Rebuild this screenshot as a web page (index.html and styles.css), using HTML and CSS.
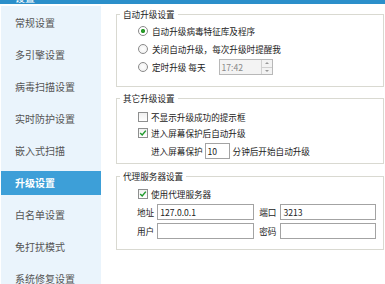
FILE: index.html
```html
<!DOCTYPE html>
<html lang="zh-CN">
<head>
    <meta charset="UTF-8">
    <title>升级设置</title>
    <link rel="stylesheet" href="styles.css">
</head>
<body>
    <div class="titlebar"><span>设置</span></div>
    <div class="main">
        <ul class="nav">
            <li>常规设置</li>
            <li>多引擎设置</li>
            <li>病毒扫描设置</li>
            <li>实时防护设置</li>
            <li>嵌入式扫描</li>
            <li class="active">升级设置</li>
            <li>白名单设置</li>
            <li>免打扰模式</li>
            <li>系统修复设置</li>
        </ul>

        <div class="content">
            <fieldset class="group group-auto">
                <legend>自动升级设置</legend>
                <div class="body">
                    <div class="row"><span class="radio checked"></span>自动升级病毒特征库及程序</div>
                    <div class="row"><span class="radio"></span>关闭自动升级，每次升级时提醒我</div>
                    <div class="row"><span class="radio"></span>定时升级 每天
                        <div class="time">
                            <span class="time-text">17:42</span>
                            <span class="spin"><i class="up"></i><i class="down"></i></span>
                        </div>
                    </div>
                </div>
            </fieldset>

            <fieldset class="group group-other">
                <legend>其它升级设置</legend>
                <div class="body">
                    <div class="row"><span class="check"></span>不显示升级成功的提示框</div>
                    <div class="row"><span class="check"><svg viewBox="0 0 10 10" width="8" height="8"><polyline points="1.5,5 4,7.5 8.5,2" fill="none" stroke="#1f9a2c" stroke-width="1.8"/></svg></span>进入屏幕保护后自动升级</div>
                    <div class="row row-indent">进入屏幕保护<div class="field field-min">10</div>分钟后开始自动升级</div>
                </div>
            </fieldset>

            <fieldset class="group group-proxy">
                <legend>代理服务器设置</legend>
                <div class="body">
                    <div class="row"><span class="check"><svg viewBox="0 0 10 10" width="8" height="8"><polyline points="1.5,5 4,7.5 8.5,2" fill="none" stroke="#1f9a2c" stroke-width="1.8"/></svg></span>使用代理服务器</div>
                    <div class="row row-field">地址<div class="field field-wide">127.0.0.1</div><span class="label-2">端口</span><div class="field field-port">3213</div></div>
                    <div class="row row-field row-second">用户<div class="field field-wide"></div><span class="label-2">密码</span><div class="field field-port"></div></div>
                </div>
            </fieldset>
        </div>
    </div>
</body>
</html>
```

FILE: styles.css
```css
body {
    margin: 0;
    width: 385px;
    height: 284px;
    overflow: hidden;
    background-color: #fff;
    font-family: "Noto Sans CJK SC", "Noto Sans", sans-serif;
    color: #222;
}
.titlebar {
    height: 4px;
    overflow: hidden;
    background-color: #2b8fca;
    padding-left: 15px;
    color: #fff;
    font-size: 10px;
}
.titlebar span {
    display: block;
    line-height: 10px;
    margin-top: -7px;
}
.main {
    display: flex;
    margin-top: 2px;
}
.nav {
    list-style: none;
    margin: 0 0 0 1px;
    padding: 5px 0 0;
    width: 100px;
    height: 278px;
    background-color: #eaf4fc;
    flex-shrink: 0;
}
.nav li {
    height: 24px;
    line-height: 24px;
    margin-bottom: 8px;
    padding-left: 14px;
    font-size: 10px;
    color: #555;
}
.nav li.active {
    background-color: #3d9fd8;
    color: #fff;
    font-weight: bold;
}
.content {
    flex: 1;
    padding: 1px 1px 0 15px;
}
.group {
    margin: 0;
    padding: 0 3px;
    min-width: 0;
    border: 1px solid #d9d9d1;
}
.group legend {
    padding: 0 3px;
    font-size: 8.6px;
    line-height: 14px;
    color: #222;
}
.group-other {
    margin-top: 4px;
}
.group-proxy {
    margin-top: 5px;
}
.body {
    font-size: 8.6px;
    padding-left: 18px;
}
.group-auto .body {
    padding: 1px 0 10px 18px;
}
.group-other .body {
    padding-top: 4px;
    padding-bottom: 4px;
}
.group-proxy .body {
    padding-top: 3px;
    padding-bottom: 10px;
}
.row {
    display: flex;
    align-items: center;
    height: 16px;
}
.group-auto .row {
    height: 18px;
}
.radio {
    width: 10px;
    height: 10px;
    box-sizing: border-box;
    border: 1px solid #8a8a8a;
    border-radius: 50%;
    margin-right: 4px;
    background: radial-gradient(circle, #fff 0, #ececec 100%);
}
.radio.checked {
    background: radial-gradient(circle, #2a9a2a 0, #2a9a2a 1.8px, #fff 2.4px);
}
.check {
    width: 10px;
    height: 10px;
    box-sizing: border-box;
    border: 1px solid #8e8f8f;
    margin-right: 3px;
    background: linear-gradient(#f0f0f0, #fff);
    display: flex;
    align-items: center;
    justify-content: center;
}
.time {
    display: flex;
    width: 54px;
    height: 16px;
    box-sizing: border-box;
    margin-left: 13px;
    border: 1px solid #b8b8b8;
    background-color: #f3f3f3;
}
.time-text {
    flex: 1;
    padding-left: 2px;
    line-height: 14px;
    color: #8a8a8a;
}
.spin {
    width: 10px;
    display: flex;
    flex-direction: column;
    border-left: 1px solid #d0d0d0;
}
.spin i {
    flex: 1;
    display: flex;
    align-items: center;
    justify-content: center;
}
.spin i.up {
    border-bottom: 1px solid #d0d0d0;
}
.spin i::after {
    content: "";
    border-left: 2px solid transparent;
    border-right: 2px solid transparent;
}
.spin i.up::after {
    border-bottom: 2px solid #999;
}
.spin i.down::after {
    border-top: 2px solid #999;
}
.row-indent {
    margin-top: 2px;
    padding-left: 13px;
}
.field {
    height: 16px;
    box-sizing: border-box;
    border: 1px solid #a3a3a3;
    background-color: #fff;
    padding-left: 2px;
    line-height: 14px;
    color: #222;
}
.field-min {
    width: 25px;
    margin: 0 3px 0 2px;
}
.row-field {
    margin-top: 2px;
    margin-left: -1px;
}
.row-second {
    margin-top: 3px;
}
.field-wide {
    width: 97px;
    margin-left: 3px;
}
.label-2 {
    margin-left: 5px;
}
.field-port {
    width: 96px;
    margin-left: 4px;
}
```
